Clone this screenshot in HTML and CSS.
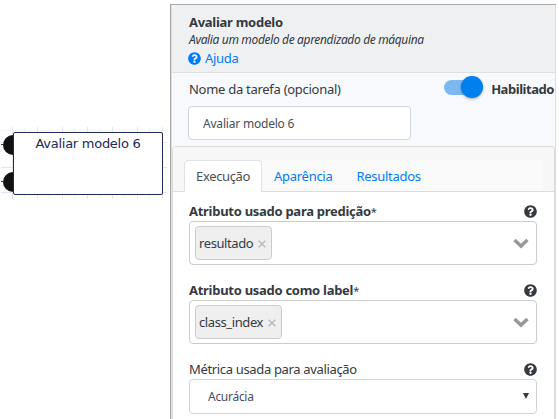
FILE: index.html
```html
<!DOCTYPE html>
<html lang="pt-BR">
<head>
<meta charset="utf-8">
<title>Avaliar modelo</title>
<link rel="stylesheet" href="styles.css">
</head>
<body>
<svg class="defs" width="0" height="0" aria-hidden="true">
  <symbol id="help" viewBox="0 0 512 512"><path fill="currentColor" d="M504 256c0 137-111 248-248 248S8 393 8 256C8 119.100 119 8 256 8s248 111.100 248 248zM262.700 90c-54.500 0-89.300 23-116.500 63.800-3.500 5.300-2.400 12.400 2.700 16.300l34.700 26.300c5.200 3.900 12.600 3 16.700-2.100 17.900-22.700 30.100-35.800 57.300-35.800 20.400 0 45.700 13.100 45.700 33 0 15-12.400 22.700-32.500 34C247.100 238.500 216 254.900 216 296v4c0 6.600 5.400 12 12 12h56c6.600 0 12-5.400 12-12v-1.300c0-28.500 83.200-29.600 83.200-106.700 0-58-60.200-102-116.500-102zM256 338c-25.400 0-46 20.600-46 46s20.600 46 46 46 46-20.600 46-46-20.600-46-46-46z"/></symbol>
  <symbol id="chevron" viewBox="0 0 16 11"><path d="M1.500 2 8 8l6.500-6" fill="none" stroke="#999" stroke-width="3.500"/></symbol>
  <symbol id="close" viewBox="0 0 8 8"><path d="m.7.700 6.600 6.600m0-6.600L.7 7.300" fill="none" stroke="#bbb" stroke-width="1.400"/></symbol>
</svg>
<main class="workspace">
  <section class="canvas">
    <div class="grid"></div>
    <i class="port port-top"></i>
    <i class="port port-bottom"></i>
    <div class="node"><span>Avaliar modelo 6</span></div>
  </section>
  <section class="panel">
    <header class="panel-header">
      <h1><span>Avaliar modelo</span></h1>
      <p><em>Avalia um modelo de aprendizado de máquina</em></p>
      <a><svg class="help"><use href="#help"/></svg><span>Ajuda</span></a>
    </header>
    <div class="task">
      <div class="task-name">
        <label><span>Nome da tarefa (opcional)</span></label>
        <div class="input"><span>Avaliar modelo 6</span></div>
      </div>
      <div class="switch"><i class="track"></i><b>Habilitado</b></div>
    </div>
    <div class="card">
      <nav class="tabs">
        <a class="tab active"><span>Execução</span></a>
        <a class="tab appearance"><span>Aparência</span></a>
        <a class="tab results"><span>Resultados</span></a>
      </nav>
      <div class="fields">
        <div class="field">
          <div class="label"><span><b>Atributo usado para predição</b><small>*</small></span><svg class="help"><use href="#help"/></svg></div>
          <div class="select"><div class="tag"><span>resultado</span><svg class="close"><use href="#close"/></svg></div><svg class="chevron"><use href="#chevron"/></svg></div>
        </div>
        <div class="field">
          <div class="label"><span><b>Atributo usado como label</b><small>*</small></span><svg class="help"><use href="#help"/></svg></div>
          <div class="select"><div class="tag tag-wide"><span>class_index</span><svg class="close"><use href="#close"/></svg></div><svg class="chevron"><use href="#chevron"/></svg></div>
        </div>
        <div class="field">
          <div class="label"><span class="metric">Métrica usada para avaliação</span><svg class="help"><use href="#help"/></svg></div>
          <div class="select dropdown"><span>Acurácia</span><i class="arrow"></i></div>
        </div>
      </div>
    </div>
  </section>
</main>
</body>
</html>
```
FILE: styles.css
```css
* { box-sizing: border-box; }
body { margin: 0; background: #fff; color: #343a40; font: 13px/20px "Noto Sans", sans-serif; letter-spacing: -.28px; overflow: hidden; }
h1, p { margin: 0; }
svg { display: block; }
.defs { position: absolute; }
.workspace { display: flex; width: 559px; height: 419px; }
.canvas { position: relative; width: 170px; flex: none; }
.grid { position: absolute; left: 1px; top: 127px; width: 166px; height: 72px;
  background:
    repeating-linear-gradient(90deg, transparent 0 11px, #e6e6ea 11px 12px, transparent 12px 23px, #f4f4f6 23px 24px, transparent 24px 25px),
    repeating-linear-gradient(180deg, transparent 0 3px, #f6f6f8 3px 4px, transparent 4px 15px, #e6e6ea 15px 16px, transparent 16px 25px); }
.port { position: absolute; left: 3px; width: 20px; height: 20px; border-radius: 50%; background: #111; }
.port::before { content: ""; position: absolute; left: -2px; top: 9px; width: 3px; height: 1px; background: #333; }
.port-top { top: 135px; }
.port-bottom { top: 172px; }
.node { position: absolute; left: 13px; top: 132px; width: 150px; height: 63px; border: 1px solid #22285a; border-radius: 2px; background: #fff; color: #22285a; text-align: center; font: 13px/20px "DejaVu Sans", sans-serif; padding-top: 1px; }
.panel { width: 386px; height: 415px; margin-top: 4px; flex: none; border: solid #aaa; border-width: 1px 0 0 1px; background: #f8f9fc; box-shadow: inset 1px 0 #ddd, inset -1px 0 #ddd; }
.panel-header { height: 68px; margin: 0 1px; padding: 7px 17px 0; background: #eff0f2; border-bottom: 1px solid #dfe0e3; border-radius: 4px 4px 0 0; }
h1 { font-size: 13px; line-height: 20px; height: 20px; }
p { font-size: 12px; line-height: 16px; height: 16px; letter-spacing: -.35px; }
.panel-header a { display: flex; gap: 4px; align-items: center; height: 20px; margin-left: -1px; color: #007bff; }
.help { width: 13px; height: 13px; flex: none; }
.task { display: flex; justify-content: space-between; height: 73px; padding: 6px 2px 0 17px; }
.task label { display: block; height: 27px; line-height: 20px; padding-left: 1px; }
.input { width: 223px; height: 34px; border: 1px solid #ced4da; border-radius: 4px; background: #fff; padding: 7px 14px; font-size: 12px; letter-spacing: -.2px; color: #495057; }
.switch { display: flex; align-items: center; gap: 9px; height: 20px; white-space: nowrap; letter-spacing: -.45px; }
.track { position: relative; width: 38px; height: 15px; border-radius: 8px; background: #7db9f1; margin-top: -3px; }
.track::after { content: ""; position: absolute; right: -1px; top: -4px; width: 22px; height: 22px; border-radius: 50%; background: #007fee; box-shadow: 0 1px 3px #0005; }
.card { height: 273px; margin: 0 1px; border: 1px solid #dcdcdc; border-bottom: 0; border-radius: 4px 4px 0 0; background: #fff; overflow: hidden; }
.tabs { display: flex; height: 45px; padding: 13px 11px 0; background: linear-gradient(#fafafa, #fafafa) 11px 13px / 359px 32px no-repeat #f7f7f7; border-bottom: 1px solid #dcdcdc; }
.tab { color: #007bff; height: 31px; line-height: 32px; padding: 0 12px; }
.tab.active { width: 78px; height: 32px; color: #495057; padding: 0 11px; background: #fff; border: 1px solid #dee2e6; border-bottom: 0; border-radius: 4px 4px 0 0; line-height: 31px; letter-spacing: -.35px; }
.fields { padding: 9px 17px 0 16px; }
.field { height: 79px; }
.label { display: flex; justify-content: space-between; align-items: center; height: 20px; }
.label small { font-size: 11px; }
.metric { letter-spacing: -.34px; }
.select { display: flex; align-items: center; justify-content: space-between; height: 44px; border: 1px solid #ccc; border-radius: 4px; padding: 0 7px 0 5px; }
.tag { display: flex; align-items: center; gap: 5px; width: 77px; height: 34px; padding-left: 3px; border: 1px solid #ccc; border-radius: 4px; background: #efefef; letter-spacing: -.4px; }
.tag-wide { width: 87px; }
.close { width: 8px; height: 8px; margin-top: 2px; }
.chevron { width: 16px; height: 11px; }
.dropdown { height: 35px; border-color: #ced4da; padding: 0 7px 0 18px; font-size: 12px; color: #495057; }
.arrow { border: solid transparent; border-width: 6px 3px 0; border-top-color: #343a40; margin-top: -2px; }
.node { letter-spacing: -.27px; }
```
